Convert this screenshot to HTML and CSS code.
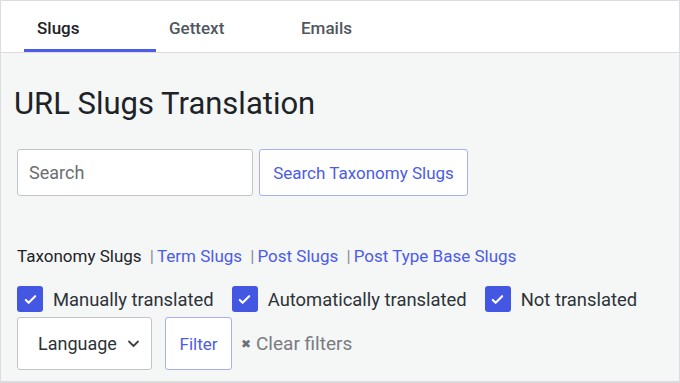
FILE: index.html
```html
<!DOCTYPE html>
<html lang="en">
<head>
    <meta charset="UTF-8">
    <meta name="viewport" content="width=device-width, initial-scale=1.0">
    <title>URL Slugs Translation</title>
    <link rel="stylesheet" href="styles.css">
</head>
<body>
    <div class="frame">
        <nav class="tabs">
            <a class="tab active" href="#">Slugs</a>
            <a class="tab" href="#">Gettext</a>
            <a class="tab" href="#">Emails</a>
        </nav>
        <div class="content">
            <h1>URL Slugs Translation</h1>
            <div class="search-row">
                <input type="text" class="search-input" placeholder="Search">
                <button class="outline-btn search-btn">Search Taxonomy Slugs</button>
            </div>
            <div class="sublinks">
                <span class="current">Taxonomy Slugs</span>
                <span class="sep">|</span><a href="#">Term Slugs</a>
                <span class="sep">|</span><a href="#">Post Slugs</a>
                <span class="sep">|</span><a href="#">Post Type Base Slugs</a>
            </div>
            <div class="checks">
                <label class="check"><span class="box"><svg viewBox="0 0 16 16" width="15" height="15"><path d="M3 8.5l3 3 7-7" fill="none" stroke="#fff" stroke-width="2.2" stroke-linecap="round" stroke-linejoin="round"/></svg></span>Manually translated</label>
                <label class="check"><span class="box"><svg viewBox="0 0 16 16" width="15" height="15"><path d="M3 8.5l3 3 7-7" fill="none" stroke="#fff" stroke-width="2.2" stroke-linecap="round" stroke-linejoin="round"/></svg></span>Automatically translated</label>
                <label class="check"><span class="box"><svg viewBox="0 0 16 16" width="15" height="15"><path d="M3 8.5l3 3 7-7" fill="none" stroke="#fff" stroke-width="2.2" stroke-linecap="round" stroke-linejoin="round"/></svg></span>Not translated</label>
            </div>
            <div class="filter-row">
                <div class="select">
                    Language
                    <svg viewBox="0 0 12 8" width="13" height="8"><path d="M1.5 1.5l4.5 4.5 4.5-4.5" fill="none" stroke="#3c434a" stroke-width="1.8" stroke-linecap="round" stroke-linejoin="round"/></svg>
                </div>
                <button class="outline-btn filter-btn">Filter</button>
                <a class="clear" href="#"><span class="x">&#x2716;</span>Clear filters</a>
            </div>
        </div>
    </div>
</body>
</html>
```

FILE: styles.css
```css
body {
    margin: 0;
    font-family: Roboto, "Liberation Sans", Arial, sans-serif;
    color: #1d2327;
    background-color: #fff;
}
.frame {
    width: 680px;
    height: 383px;
    box-sizing: border-box;
    border: 1px solid #dcdcde;
    border-bottom-width: 2px;
    background-color: #f5f6f6;
    overflow: hidden;
}
.tabs {
    display: flex;
    height: 51px;
    padding-left: 23px;
    background-color: #fff;
    border-bottom: 1px solid #dcdcde;
}
.tab {
    width: 132px;
    box-sizing: border-box;
    padding-left: 13px;
    display: flex;
    align-items: center;
    font-size: 17px;
    font-weight: 500;
    color: #50575e;
    text-decoration: none;
    border-bottom: 3px solid transparent;
    padding-top: 5px;
}
.tab.active {
    color: #1d2327;
    border-bottom-color: #4b5ce6;
}
.content {
    padding: 0 16px;
}
h1 {
    margin: 32px 0 0 -3px;
    font-size: 31px;
    font-weight: 400;
    line-height: 38px;
}
.search-row {
    display: flex;
    gap: 6px;
    margin-top: 26px;
}
.search-input {
    width: 236px;
    height: 47px;
    box-sizing: border-box;
    padding: 0 11px;
    border: 1px solid #c3c4c7;
    border-radius: 3px;
    font-family: inherit;
    font-size: 18px;
    color: #1d2327;
    background-color: #fff;
}
.search-input::placeholder {
    color: #6b6e72;
}
.outline-btn {
    box-sizing: border-box;
    border: 1px solid #a7aef2;
    border-radius: 3px;
    background-color: #fff;
    color: #4b5ce6;
    font-family: inherit;
    font-size: 17px;
    cursor: pointer;
}
.search-btn {
    width: 209px;
    height: 47px;
}
.sublinks {
    margin-top: 50px;
    font-size: 17px;
    line-height: 20px;
}
.sublinks .current {
    color: #1d2327;
}
.sublinks .sep {
    color: #8c8f94;
    margin: 0 3px 0 4px;
}
.sublinks a {
    color: #4b5ce6;
    text-decoration: none;
}
.checks {
    display: flex;
    gap: 18px;
    margin-top: 20px;
}
.check {
    display: flex;
    align-items: center;
    gap: 10px;
    font-size: 18.4px;
    color: #2c3338;
}
.box {
    width: 26px;
    height: 26px;
    border-radius: 3px;
    background-color: #4457e3;
    display: flex;
    align-items: center;
    justify-content: center;
}
.filter-row {
    display: flex;
    align-items: center;
    margin-top: 5px;
}
.select {
    width: 135px;
    height: 53px;
    box-sizing: border-box;
    padding: 0 11px 0 20px;
    display: flex;
    align-items: center;
    justify-content: space-between;
    background-color: #fff;
    border: 1px solid #c3c4c7;
    border-radius: 3px;
    font-size: 18px;
    color: #2c3338;
}
.filter-btn {
    width: 67px;
    height: 53px;
    margin-left: 13px;
}
.clear {
    margin-left: 9px;
    color: #787c82;
    text-decoration: none;
    font-size: 19px;
    display: flex;
    align-items: center;
}
.clear .x {
    font-size: 12px;
    margin-right: 5px;
    color: #6c7075;
}
```
